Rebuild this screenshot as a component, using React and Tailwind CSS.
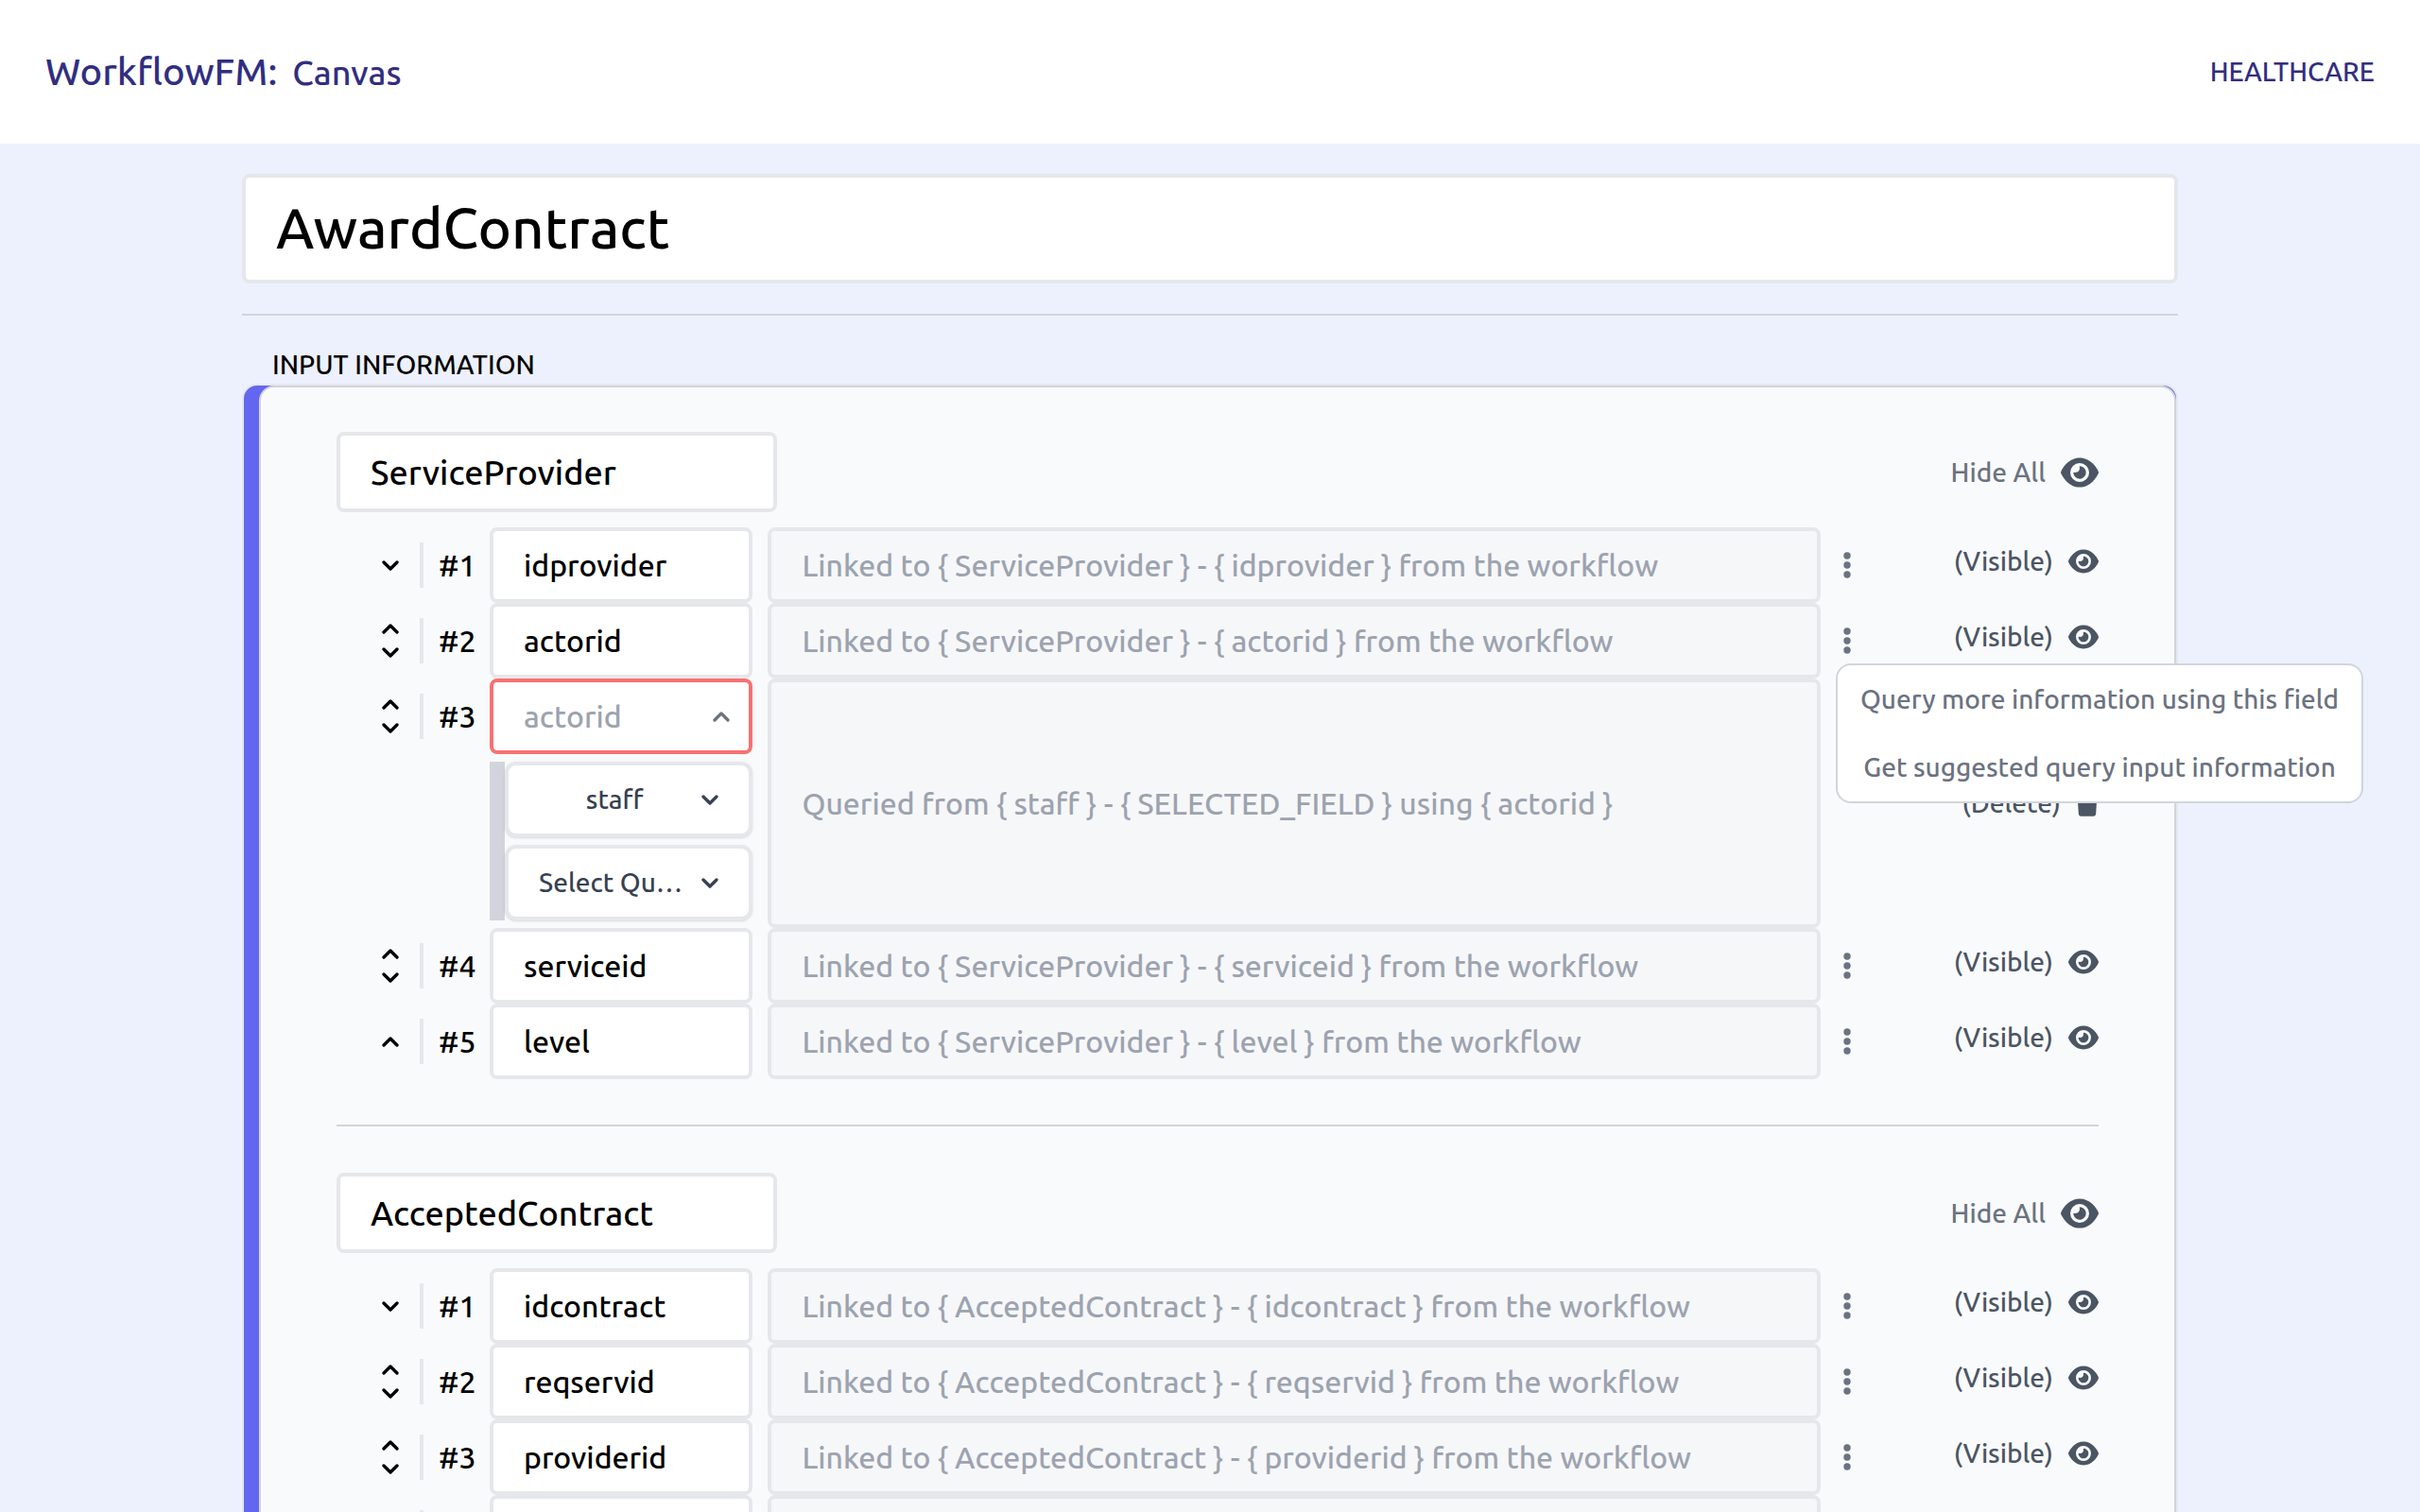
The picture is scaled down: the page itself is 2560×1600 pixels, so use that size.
import React from "react";
import { FaEye, FaTrash } from "react-icons/fa6";

const sections = [
  {
    name: "ServiceProvider",
    fields: [
      { name: "idprovider" },
      { name: "actorid", menuOpen: true },
      { name: "actorid", query: { table: "staff", field: "Select Query Field" } },
      { name: "serviceid" },
      { name: "level" },
    ],
  },
  {
    name: "AcceptedContract",
    fields: [
      { name: "idcontract" },
      { name: "reqservid" },
      { name: "providerid" },
      { name: "contractdate" },
      { name: "status" },
    ],
  },
];

function Chevron({ up = false, className = "" }) {
  return (
    <svg
      viewBox="0 0 18 11"
      fill="none"
      stroke="currentColor"
      strokeWidth="3.3"
      strokeLinecap="round"
      strokeLinejoin="round"
      aria-hidden="true"
      className={"h-[11px] w-[18px] shrink-0 " + className}
    >
      <path d={up ? "M2 9 9 2l7 7" : "M2 2l7 7 7-7"} />
    </svg>
  );
}

function Dots() {
  return (
    <svg viewBox="0 0 8 28" fill="currentColor" aria-hidden="true" className="h-7 w-2">
      <circle cx="4" cy="4" r="3.7" />
      <circle cx="4" cy="14" r="3.7" />
      <circle cx="4" cy="24" r="3.7" />
    </svg>
  );
}

function FieldMenu() {
  return (
    <div
      role="menu"
      className="absolute left-0 top-full z-10 flex flex-col rounded-2xl border-2 border-[#d1d5db] bg-white text-[28px] font-medium leading-10 text-[#6b7280]"
    >
      <button type="button" role="menuitem" className="whitespace-nowrap px-6 py-4">
        Query more information using this field
      </button>
      <button type="button" role="menuitem" className="whitespace-nowrap px-6 py-4">
        Get suggested query input information
      </button>
    </div>
  );
}

function Dropdown({ label, text }) {
  return (
    <button
      type="button"
      aria-label={label}
      aria-haspopup="listbox"
      className="flex h-20 w-full items-center rounded-xl border-4 border-[#e5e7eb] bg-white px-8 text-[28px] font-medium leading-10 text-[#374151] shadow-sm"
    >
      <span className="min-w-0 flex-1 truncate text-center">{text}</span>
      <Chevron className="ml-3" />
    </button>
  );
}

function FieldRow({ field, index, count, section }) {
  const { query } = field;
  const source = query
    ? `Queried from { ${query.table} } - { SELECTED_FIELD } using { ${field.name} }`
    : `Linked to { ${section} } - { ${field.name} } from the workflow`;

  return (
    <li className="grid grid-cols-[146px_1fr_4fr_278px] gap-x-4">
      <div className="flex h-20 items-center pl-12">
        <div className="flex w-10 shrink-0 flex-col gap-[14px]">
          {index > 0 && (
            <button type="button" aria-label="Move up" className="w-[18px]">
              <Chevron up />
            </button>
          )}
          {index < count - 1 && (
            <button type="button" aria-label="Move down" className="w-[18px]">
              <Chevron />
            </button>
          )}
        </div>
        <span className="flex h-12 shrink-0 items-center whitespace-nowrap border-l-4 border-[#e5e7eb] pl-4 text-[32px] font-medium leading-12">
          #{index + 1}
        </span>
      </div>

      <div className="min-w-0">
        {query ? (
          <>
            <div className="flex h-20 items-center rounded-lg border-4 border-[#f87171] bg-white pl-8 pr-5 text-[32px] leading-12">
              <input
                aria-label={`Field ${index + 1} name`}
                placeholder={field.name}
                className="w-full min-w-0 flex-1 bg-transparent font-medium outline-none placeholder:text-[#9ca3af]"
              />
              <button type="button" aria-label="Collapse query" className="text-[#6b7280]">
                <Chevron up />
              </button>
            </div>
            <div className="my-2 flex flex-col gap-2 border-l-[16px] border-[#d1d5db]">
              <Dropdown label="Query table" text={query.table} />
              <Dropdown label="Query field" text={query.field} />
            </div>
          </>
        ) : (
          <input
            aria-label={`Field ${index + 1} name`}
            defaultValue={field.name}
            className="h-20 w-full rounded-lg border-4 border-[#e5e7eb] bg-white px-8 text-[32px] font-medium leading-12 outline-none"
          />
        )}
      </div>

      <input
        readOnly
        aria-label={`Field ${index + 1} source`}
        value={source}
        className="h-full w-full min-w-0 rounded-lg border-4 border-[#e5e7eb] bg-[#f6f7f9] px-8 text-[32px] font-medium leading-12 text-[#9ca3af] outline-none"
      />

      {query ? (
        <div className="flex items-center justify-end">
          <button type="button" className="flex items-center gap-4 text-[28px] font-medium leading-10 text-[#4b5563]">
            (Delete)
            <FaTrash className="h-7 w-6" />
          </button>
        </div>
      ) : (
        <div className="flex items-start justify-between">
          <div className="relative">
            <button
              type="button"
              aria-label="Field options"
              className="my-4 flex h-12 w-6 items-center justify-center text-[#6b7280]"
            >
              <Dots />
            </button>
            {field.menuOpen && (
              <div className="absolute left-0 top-16">
                <FieldMenu />
              </div>
            )}
          </div>
          <button
            type="button"
            className="my-4 flex items-center gap-4 text-[28px] font-medium leading-10 text-[#4b5563]"
          >
            (Visible)
            <FaEye className="size-8" />
          </button>
        </div>
      )}
    </li>
  );
}

function Section({ section }) {
  return (
    <section>
      <div className="mb-4 flex items-center justify-between">
        <input
          aria-label="Information name"
          defaultValue={section.name}
          className="h-[85px] w-1/4 rounded-lg border-4 border-[#e5e7eb] bg-white px-8 text-[36px] font-medium leading-[44px] outline-none"
        />
        <button type="button" className="flex items-center gap-4 text-[28px] font-medium leading-10 text-[#6b7280]">
          Hide All
          <FaEye className="size-10 text-[#4b5563]" />
        </button>
      </div>
      <ul>
        {section.fields.map((field, i) => (
          <FieldRow key={i} field={field} index={i} count={section.fields.length} section={section.name} />
        ))}
      </ul>
    </section>
  );
}

export default function App() {
  return (
    <div className="flex h-screen flex-col overflow-hidden bg-[#edf1fe] font-['Ubuntu','Noto_Sans',sans-serif] text-black">
      <header className="flex h-[152px] shrink-0 items-center justify-between bg-white px-12 font-medium text-[#312e81]">
        <div className="flex items-baseline gap-4">
          <a href="#" className="text-[40px] leading-[56px]">WorkflowFM:</a>
          <span className="text-[36px] leading-[56px]">Canvas</span>
        </div>
        <a href="#" className="text-[28px] leading-10">HEALTHCARE</a>
      </header>

      <main className="mx-auto w-4/5 pt-8">
        <input
          aria-label="Component name"
          defaultValue="AwardContract"
          className="block h-[116px] w-full rounded-lg border-4 border-[#e5e7eb] bg-white px-8 pb-1 text-[60px] font-medium leading-[72px] outline-none"
        />
        <hr className="my-8 border-t-2 border-[#d1d5db]" />
        <h2 className="px-8 text-[28px] font-medium leading-10">INPUT INFORMATION</h2>
        <div className="rounded-2xl border-2 border-[#e5e7eb] bg-[#6366f1] pl-4">
          <div className="rounded-2xl border-2 border-[#d1d5db] bg-[#f9fafb] px-20 pb-12 pt-[47px]">
            {sections.map((section, i) => (
              <React.Fragment key={section.name}>
                {i > 0 && <hr className="mb-[49px] mt-12 border-t-2 border-[#d1d5db]" />}
                <Section section={section} />
              </React.Fragment>
            ))}
          </div>
        </div>
      </main>
    </div>
  );
}
